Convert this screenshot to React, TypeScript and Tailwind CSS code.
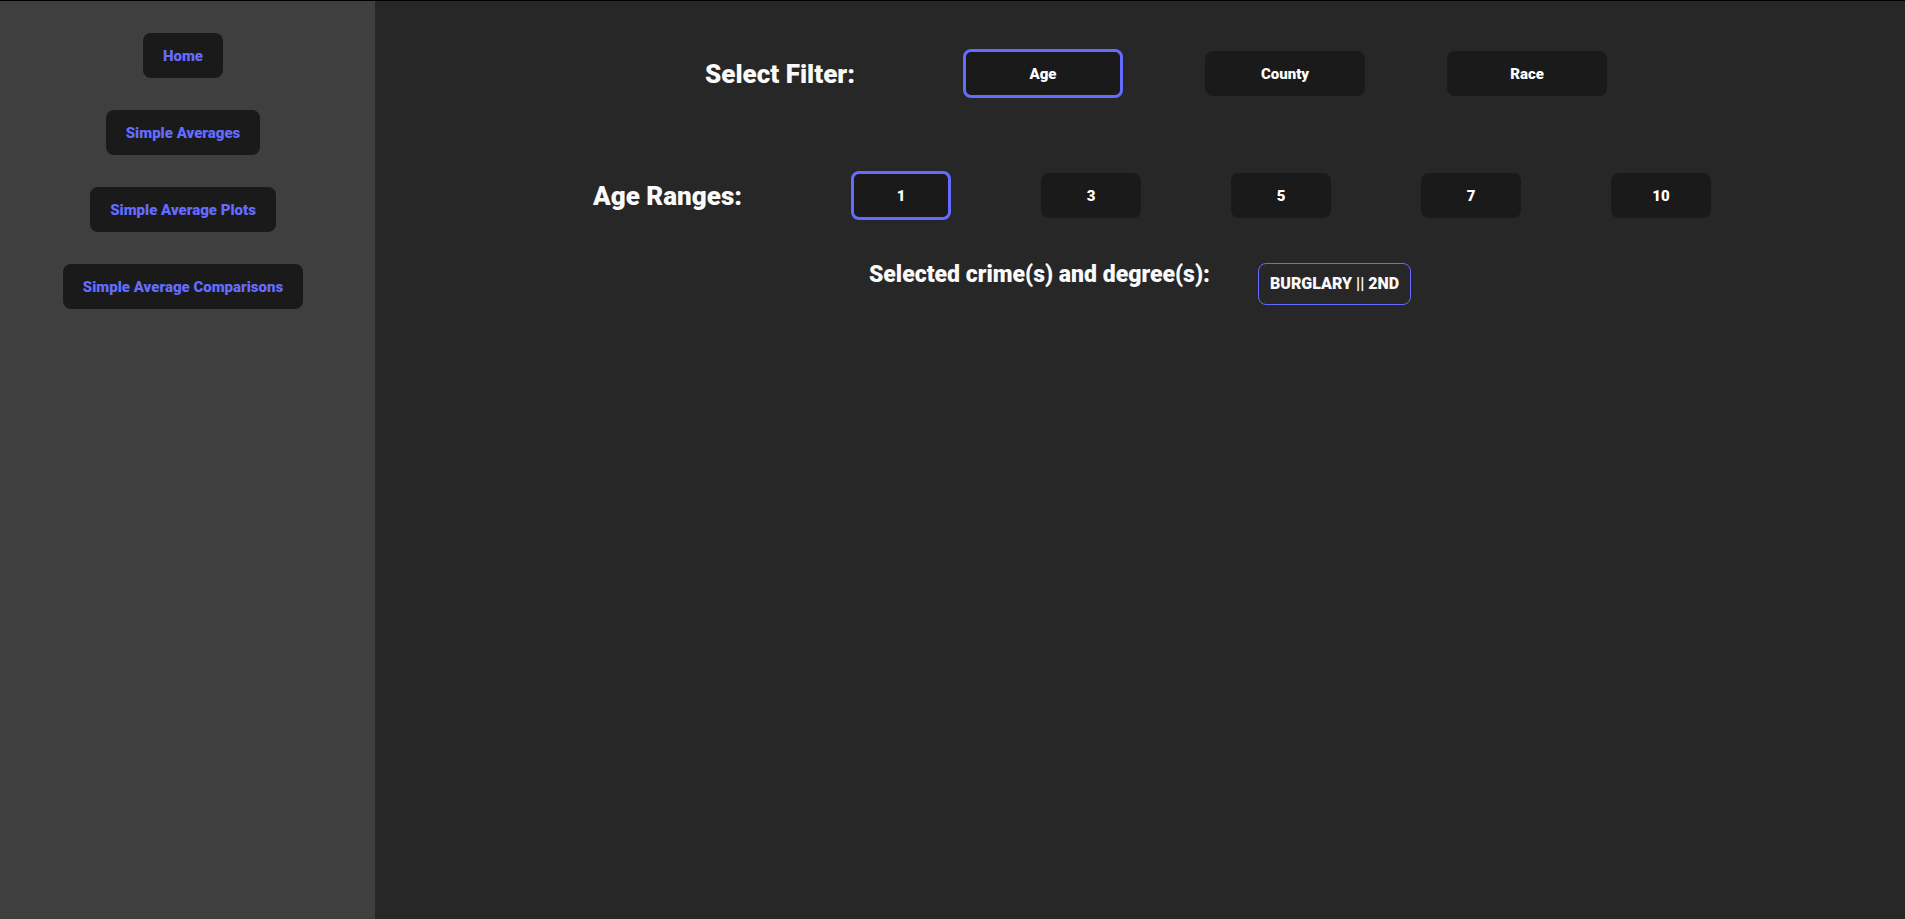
import { useState } from "react";

const pages = ["Home", "Simple Averages", "Simple Average Plots", "Simple Average Comparisons"];
const filters = ["Age", "County", "Race"];
const ranges = ["1", "3", "5", "7", "10"];

function OptionButton({ label, width, selected, onSelect }: { label: string; width: string; selected: boolean; onSelect: () => void }) {
  const tone = selected ? "h-[49px] border-3 border-[#646cff]" : "h-[45px]";
  return (
    <button
      type="button"
      aria-pressed={selected}
      onClick={onSelect}
      className={`${width} ${tone} cursor-pointer rounded-lg bg-[#1a1a1a] text-[15px] leading-6 text-white`}
    >
      {label}
    </button>
  );
}

export default function App() {
  const [filter, setFilter] = useState("Age");
  const [range, setRange] = useState("1");

  return (
    <div className="flex min-h-screen border-t border-black bg-[#272727] font-['Roboto',sans-serif] font-black text-[#fafafa]">
      <nav className="flex w-[375px] shrink-0 flex-col items-center gap-8 bg-[#3f3f3f] pt-8 pr-[9px]">
        {pages.map((page) => (
          <a key={page} href="#" className="flex h-[45px] items-center rounded-lg bg-[#1a1a1a] px-5 text-[15px] leading-6 text-[#646cff]">
            {page}
          </a>
        ))}
      </nav>
      <main className="flex flex-1 flex-col items-center pt-12">
        <section className="flex h-[49px] items-center">
          <h2 className="w-[290px] pl-8 text-[26px] leading-8">Select Filter:</h2>
          <div className="flex items-center gap-[82px]">
            {filters.map((f) => (
              <OptionButton key={f} label={f} width="w-[160px]" selected={f === filter} onSelect={() => setFilter(f)} />
            ))}
          </div>
        </section>
        <section className="mt-[73px] flex h-[49px] items-center">
          <h2 className="w-[282px] pl-6 text-[26px] leading-8">Age Ranges:</h2>
          <div className="flex items-center gap-[90px]">
            {ranges.map((r) => (
              <OptionButton key={r} label={r} width="w-[100px]" selected={r === range} onSelect={() => setRange(r)} />
            ))}
          </div>
        </section>
        <section className="mt-[43px] flex items-start gap-12">
          <h3 className="text-[23px] leading-6">Selected crime(s) and degree(s):</h3>
          <p className="flex h-[42px] items-center rounded-lg border border-[#646cff] px-[11px] text-[16px] leading-6">BURGLARY || 2ND</p>
        </section>
      </main>
    </div>
  );
}
